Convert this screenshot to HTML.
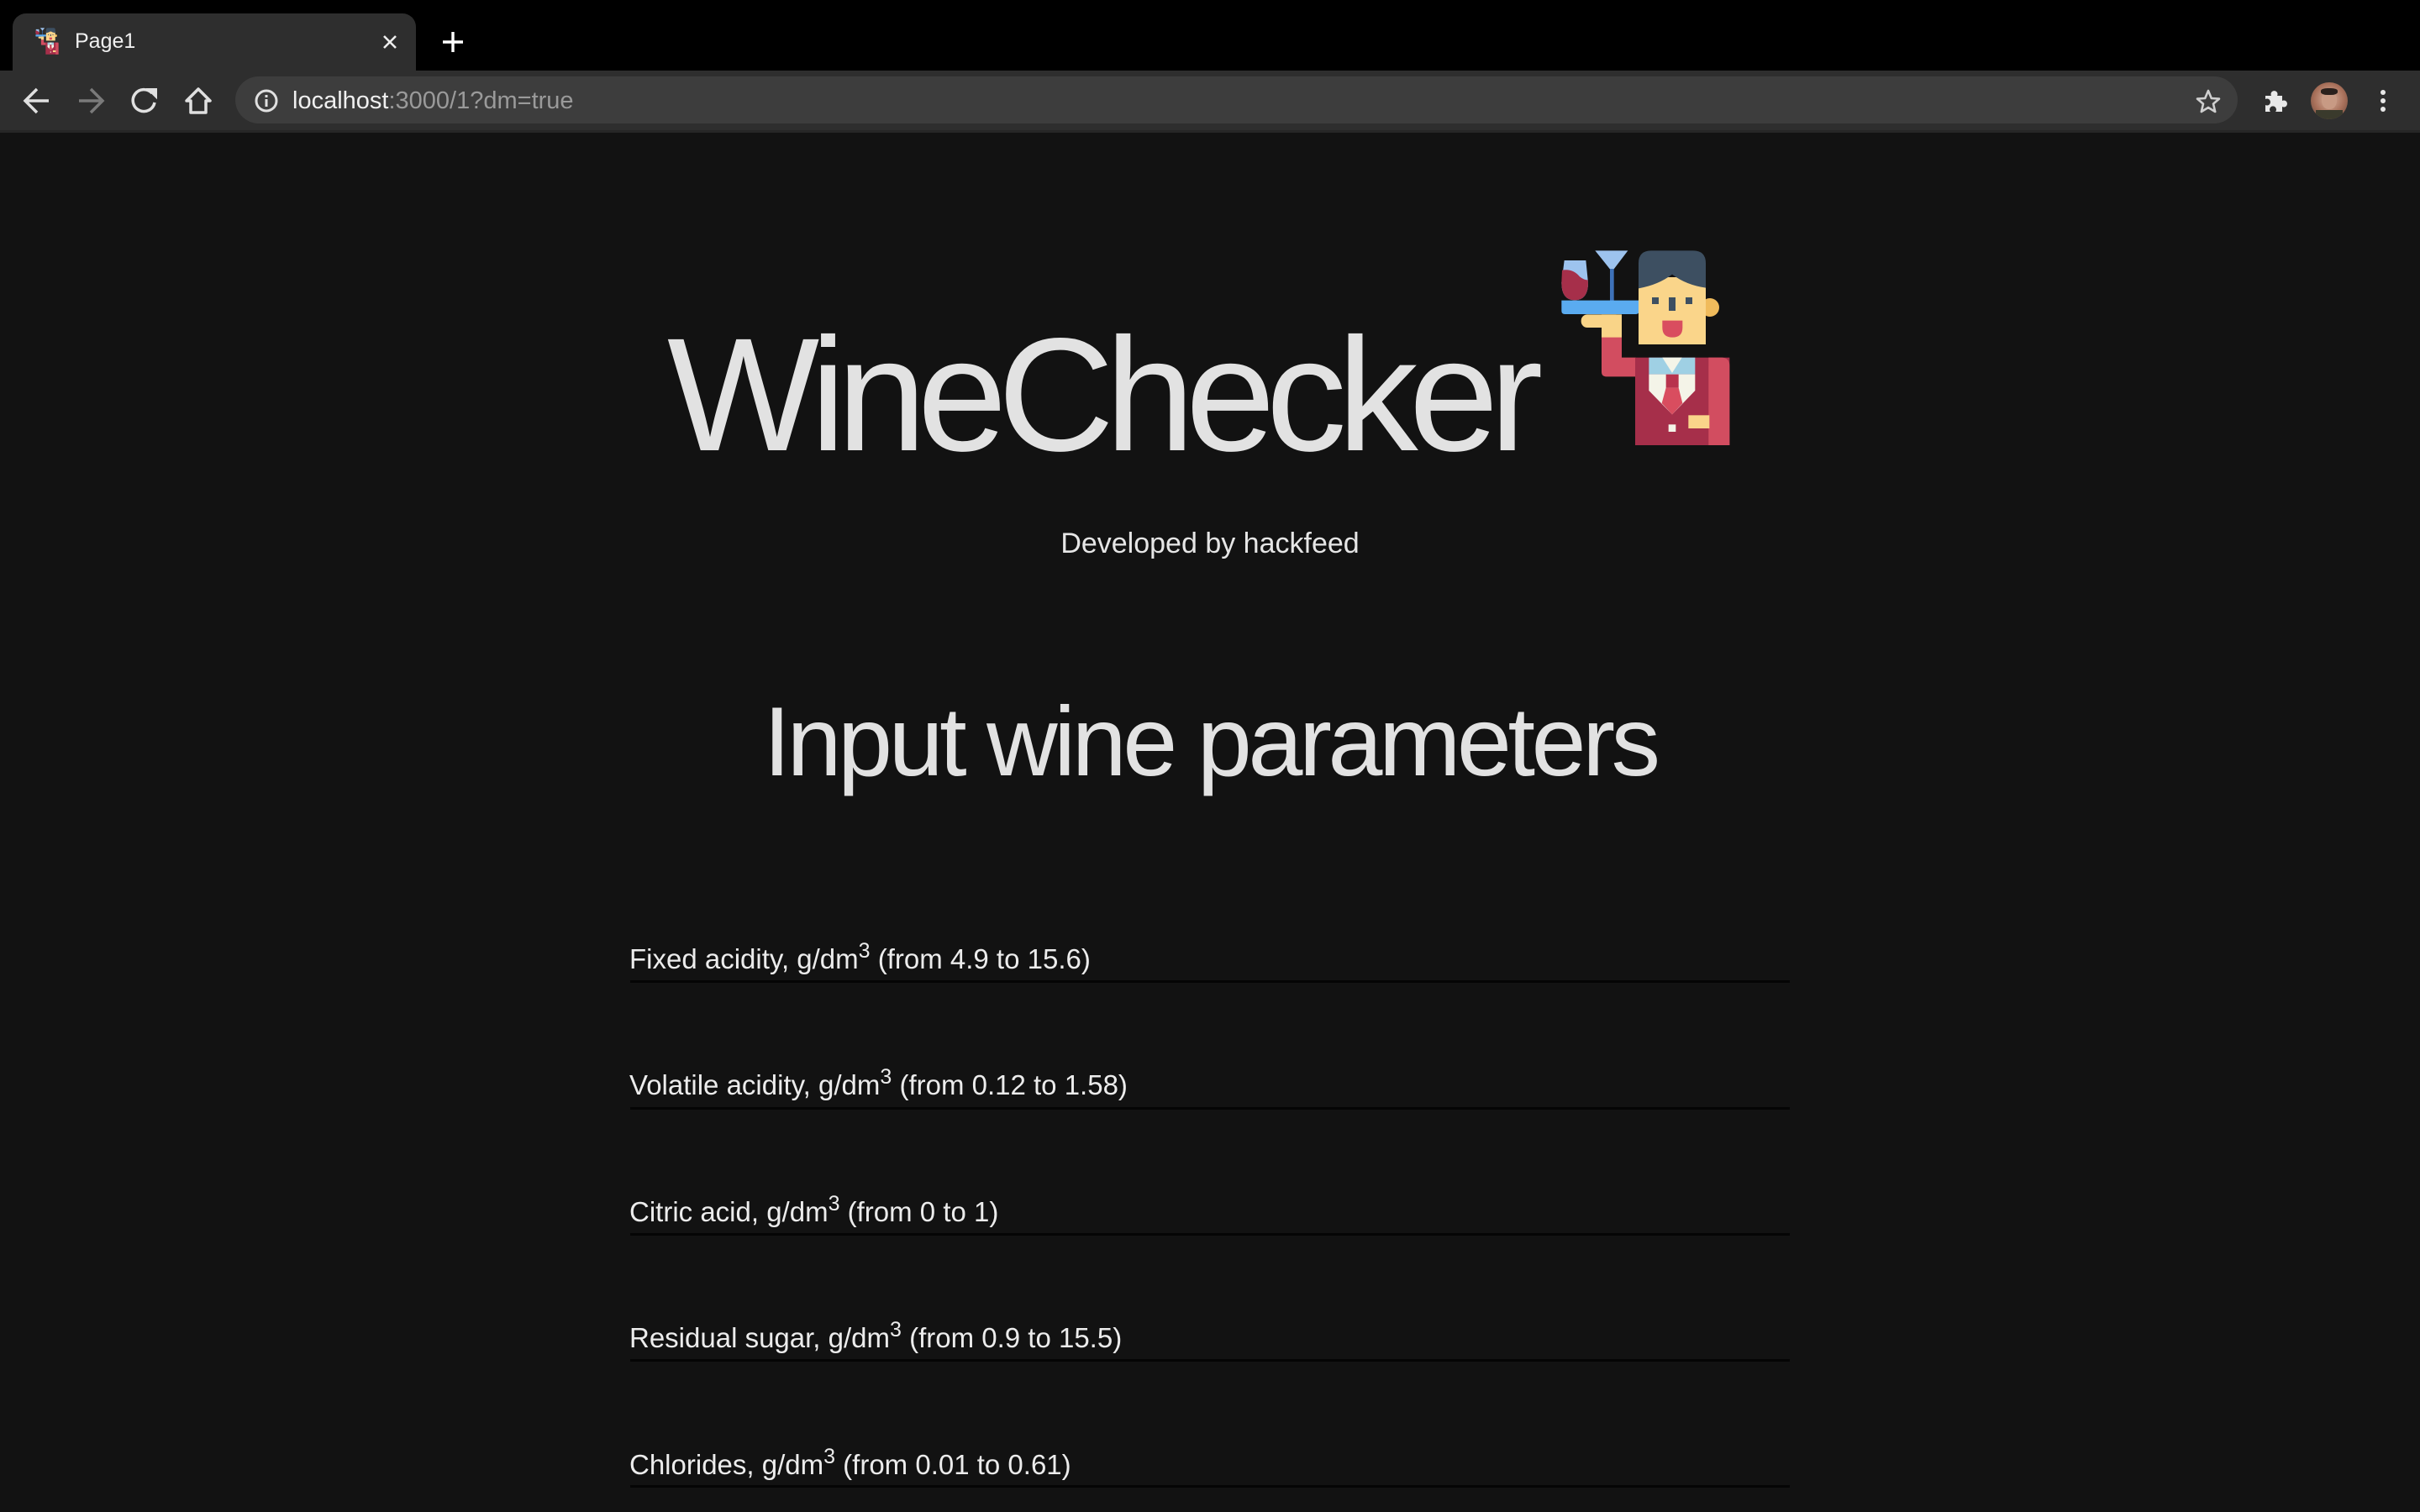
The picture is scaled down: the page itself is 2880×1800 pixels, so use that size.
<!DOCTYPE html>
<html><head><meta charset="utf-8">
<style>
html,body{margin:0;padding:0;width:2880px;height:1800px;overflow:hidden;background:#121212;font-family:"Liberation Sans",sans-serif;}
.abs{position:absolute;}
#strip{left:0;top:0;width:2880px;height:84px;background:#000;}
#tab{left:15px;top:16px;width:480px;height:68px;background:#2e2e2e;border-radius:16px 16px 0 0;}
#toolbar{left:0;top:84px;width:2880px;height:71px;background:#2e2e2e;border-bottom:3px solid #262626;}
#url{left:280px;top:91px;width:2383px;height:56px;background:#3d3d3d;border-radius:28px;}
.t{color:#e3e3e3;white-space:nowrap;}
.lab{position:absolute;left:749px;font-size:33px;color:#ececec;white-space:nowrap;line-height:1;}
.lab sup{font-size:25px;vertical-align:0;position:relative;top:-13px;}
.line{position:absolute;left:750px;width:1380px;height:3px;background:#050505;}
</style></head><body>
<svg width="0" height="0" style="position:absolute">
<defs>
<g id="w">
<circle cx="705" cy="258" r="33" fill="#f0bb5c"/>
<path d="M185,90 L262,90 L270,170 Q270,232 222,232 Q175,232 175,170 Z" fill="#9dc3ee"/>
<path d="M177,125 Q215,118 240,148 Q255,160 269,160 L270,170 Q270,232 222,232 Q175,232 175,170 Z" fill="#a62f4a"/>
<polygon points="295,55 412,55 355,130" fill="#9dc3ee"/>
<rect x="348" y="120" width="14" height="115" fill="#3e72b9"/>
<path d="M175,233 L452,233 L452,270 Q452,282 440,282 L187,282 Q175,282 175,270 Z" fill="#5aabf0"/>
<rect x="245" y="283" width="145" height="47" rx="22" fill="#f9d488"/>
<rect x="318" y="283" width="72" height="85" fill="#f9d488"/>
<path d="M318,365 L390,365 L390,437 L440,437 L440,505 L335,505 Q318,505 318,488 Z" fill="#d24d60"/>
<rect x="450" y="150" width="240" height="240" fill="#fad58a"/>
<path d="M450,190 L450,100 Q450,55 495,55 L645,55 Q690,55 690,100 L690,188 Q620,178 570,140 Q520,178 450,190 Z" fill="#3d4f61"/>
<rect x="498" y="222" width="24" height="24" fill="#3d4f61"/>
<rect x="618" y="222" width="24" height="24" fill="#3d4f61"/>
<rect x="558" y="222" width="24" height="48" fill="#3d4f61"/>
<path d="M535,305 L607,305 L607,330 Q607,365 571,365 Q535,365 535,330 Z" fill="#d94d5f"/>
<rect x="438" y="437" width="337" height="313" fill="#a62f4a"/>
<path d="M700,437 L745,437 Q775,437 775,467 L775,750 L700,750 Z" fill="#d24d60"/>
<rect x="487" y="437" width="165" height="60" fill="#9fd0e4"/>
<polygon points="535,437 605,437 570,492" fill="#f4f4e8"/>
<polygon points="487,497 652,497 652,555 570,640 487,555" fill="#f4f4e8"/>
<rect x="548" y="497" width="45" height="48" fill="#b8334d"/>
<polygon points="548,545 593,545 607,600 570,640 533,600" fill="#d94d5f"/>
<rect x="628" y="643" width="75" height="47" fill="#fad58a"/>
<rect x="557" y="676" width="26" height="26" fill="#f4f4e8"/>
</g>
</defs></svg>

<div id="strip" class="abs"></div>
<div id="tab" class="abs"></div>
<svg class="abs" style="left:42px;top:33px" width="28" height="32" viewBox="170 50 610 705"><use href="#w"/></svg>
<div class="abs t" style="left:89px;top:35px;font-size:25px;color:#f0f0f0;">Page1</div>
<svg class="abs" style="left:452px;top:38px" width="24" height="24" viewBox="0 0 24 24"><path d="M5,5 L19,19 M19,5 L5,19" stroke="#eee" stroke-width="2.6"/></svg>
<svg class="abs" style="left:525px;top:36px" width="28" height="28" viewBox="0 0 28 28"><path d="M14,2 V26 M2,14 H26" stroke="#fff" stroke-width="3.4"/></svg>

<div id="toolbar" class="abs"></div>
<svg class="abs" style="left:0;top:84px" width="280" height="72" viewBox="0 0 280 72">
<path d="M58,36 H30 M44,22 L30,36 L44,50" stroke="#e0e0e0" stroke-width="3.5" fill="none"/>
<path d="M94,36 H122 M108,22 L122,36 L108,50" stroke="#7a7a7a" stroke-width="3.5" fill="none"/>
<path d="M181,27 A13,13 0 1 0 184,38" stroke="#e0e0e0" stroke-width="3.5" fill="none"/>
<polygon points="176,22 186,22 186,32" fill="#e0e0e0" stroke="#e0e0e0" stroke-width="2"/>
<path d="M236,22 L250,36 L245,36 L245,50 L227,50 L227,36 L222,36 Z" stroke="#e0e0e0" stroke-width="3.5" fill="none" stroke-linejoin="round"/>
</svg>
<div id="url" class="abs"></div>
<svg class="abs" style="left:302px;top:105px" width="30" height="30" viewBox="0 0 30 30"><circle cx="15" cy="15" r="12" stroke="#e0e0e0" stroke-width="3" fill="none"/><rect x="13.5" y="13" width="3" height="9" fill="#e0e0e0"/><rect x="13.5" y="8" width="3" height="3" fill="#e0e0e0"/></svg>
<div class="abs t" style="left:348px;top:104px;font-size:29px;"><span style="color:#f0f0f0">localhost</span><span style="color:#9a9a9a">:3000/1?dm=true</span></div>
<svg class="abs" style="left:2612px;top:105px" width="32" height="32" viewBox="0 0 32 32"><polygon points="16,3 19.8,12 29,12.6 22,18.6 24.2,28 16,23 7.8,28 10,18.6 3,12.6 12.2,12" stroke="#cfcfcf" stroke-width="2.6" fill="none" stroke-linejoin="round"/></svg>
<svg class="abs" style="left:2693px;top:105px" width="30" height="30" viewBox="0 0 30 30"><path d="M3,9 H10 A4,4 0 1 1 17,9 H23 V15 A4,4 0 1 1 23,22 V28 H15 A4,4 0 1 0 9,28 H3 V20 A4,4 0 1 0 3,13 Z" fill="#e8e8e8"/></svg>
<div class="abs" style="left:2750px;top:98px;width:44px;height:44px;border-radius:50%;background:radial-gradient(circle at 50% 45%,#d9b3a0 0,#a8705a 18px,#6d4a3c 30px);overflow:hidden"><div style="position:absolute;left:13px;top:10px;width:18px;height:22px;border-radius:45%;background:#c89a84"></div><div style="position:absolute;left:12px;top:7px;width:20px;height:8px;border-radius:40%;background:#2a201c"></div><div style="position:absolute;left:6px;top:33px;width:32px;height:14px;background:#3a3a2c"></div></div>
<div class="abs" style="left:2833px;top:107px;width:6px;height:6px;border-radius:50%;background:#e8e8e8"></div>
<div class="abs" style="left:2833px;top:117px;width:6px;height:6px;border-radius:50%;background:#e8e8e8"></div>
<div class="abs" style="left:2833px;top:127px;width:6px;height:6px;border-radius:50%;background:#e8e8e8"></div>

<div class="abs t" style="left:794px;top:374px;font-size:192px;line-height:192px;letter-spacing:-11px;color:#e2e2e2;">WineChecker</div>
<svg class="abs" style="left:1800px;top:280px" width="300" height="270" viewBox="0 0 900 810"><use href="#w"/></svg>
<div class="abs t" style="left:0;width:2880px;text-align:center;top:630px;font-size:34px;line-height:34px;color:#e6e6e6;">Developed by hackfeed</div>
<div class="abs t" style="left:0;width:2880px;text-align:center;top:824px;font-size:117px;line-height:117px;letter-spacing:-4.5px;color:#e2e2e2;">Input wine parameters</div>

<div class="lab" style="top:1125px">Fixed acidity, g/dm<sup>3</sup> (from 4.9 to 15.6)</div>
<div class="line" style="top:1167px"></div>
<div class="lab" style="top:1275px">Volatile acidity, g/dm<sup>3</sup> (from 0.12 to 1.58)</div>
<div class="line" style="top:1318px"></div>
<div class="lab" style="top:1426px">Citric acid, g/dm<sup>3</sup> (from 0 to 1)</div>
<div class="line" style="top:1468px"></div>
<div class="lab" style="top:1576px">Residual sugar, g/dm<sup>3</sup> (from 0.9 to 15.5)</div>
<div class="line" style="top:1618px"></div>
<div class="lab" style="top:1727px">Chlorides, g/dm<sup>3</sup> (from 0.01 to 0.61)</div>
<div class="line" style="top:1768px"></div>
</body></html>
